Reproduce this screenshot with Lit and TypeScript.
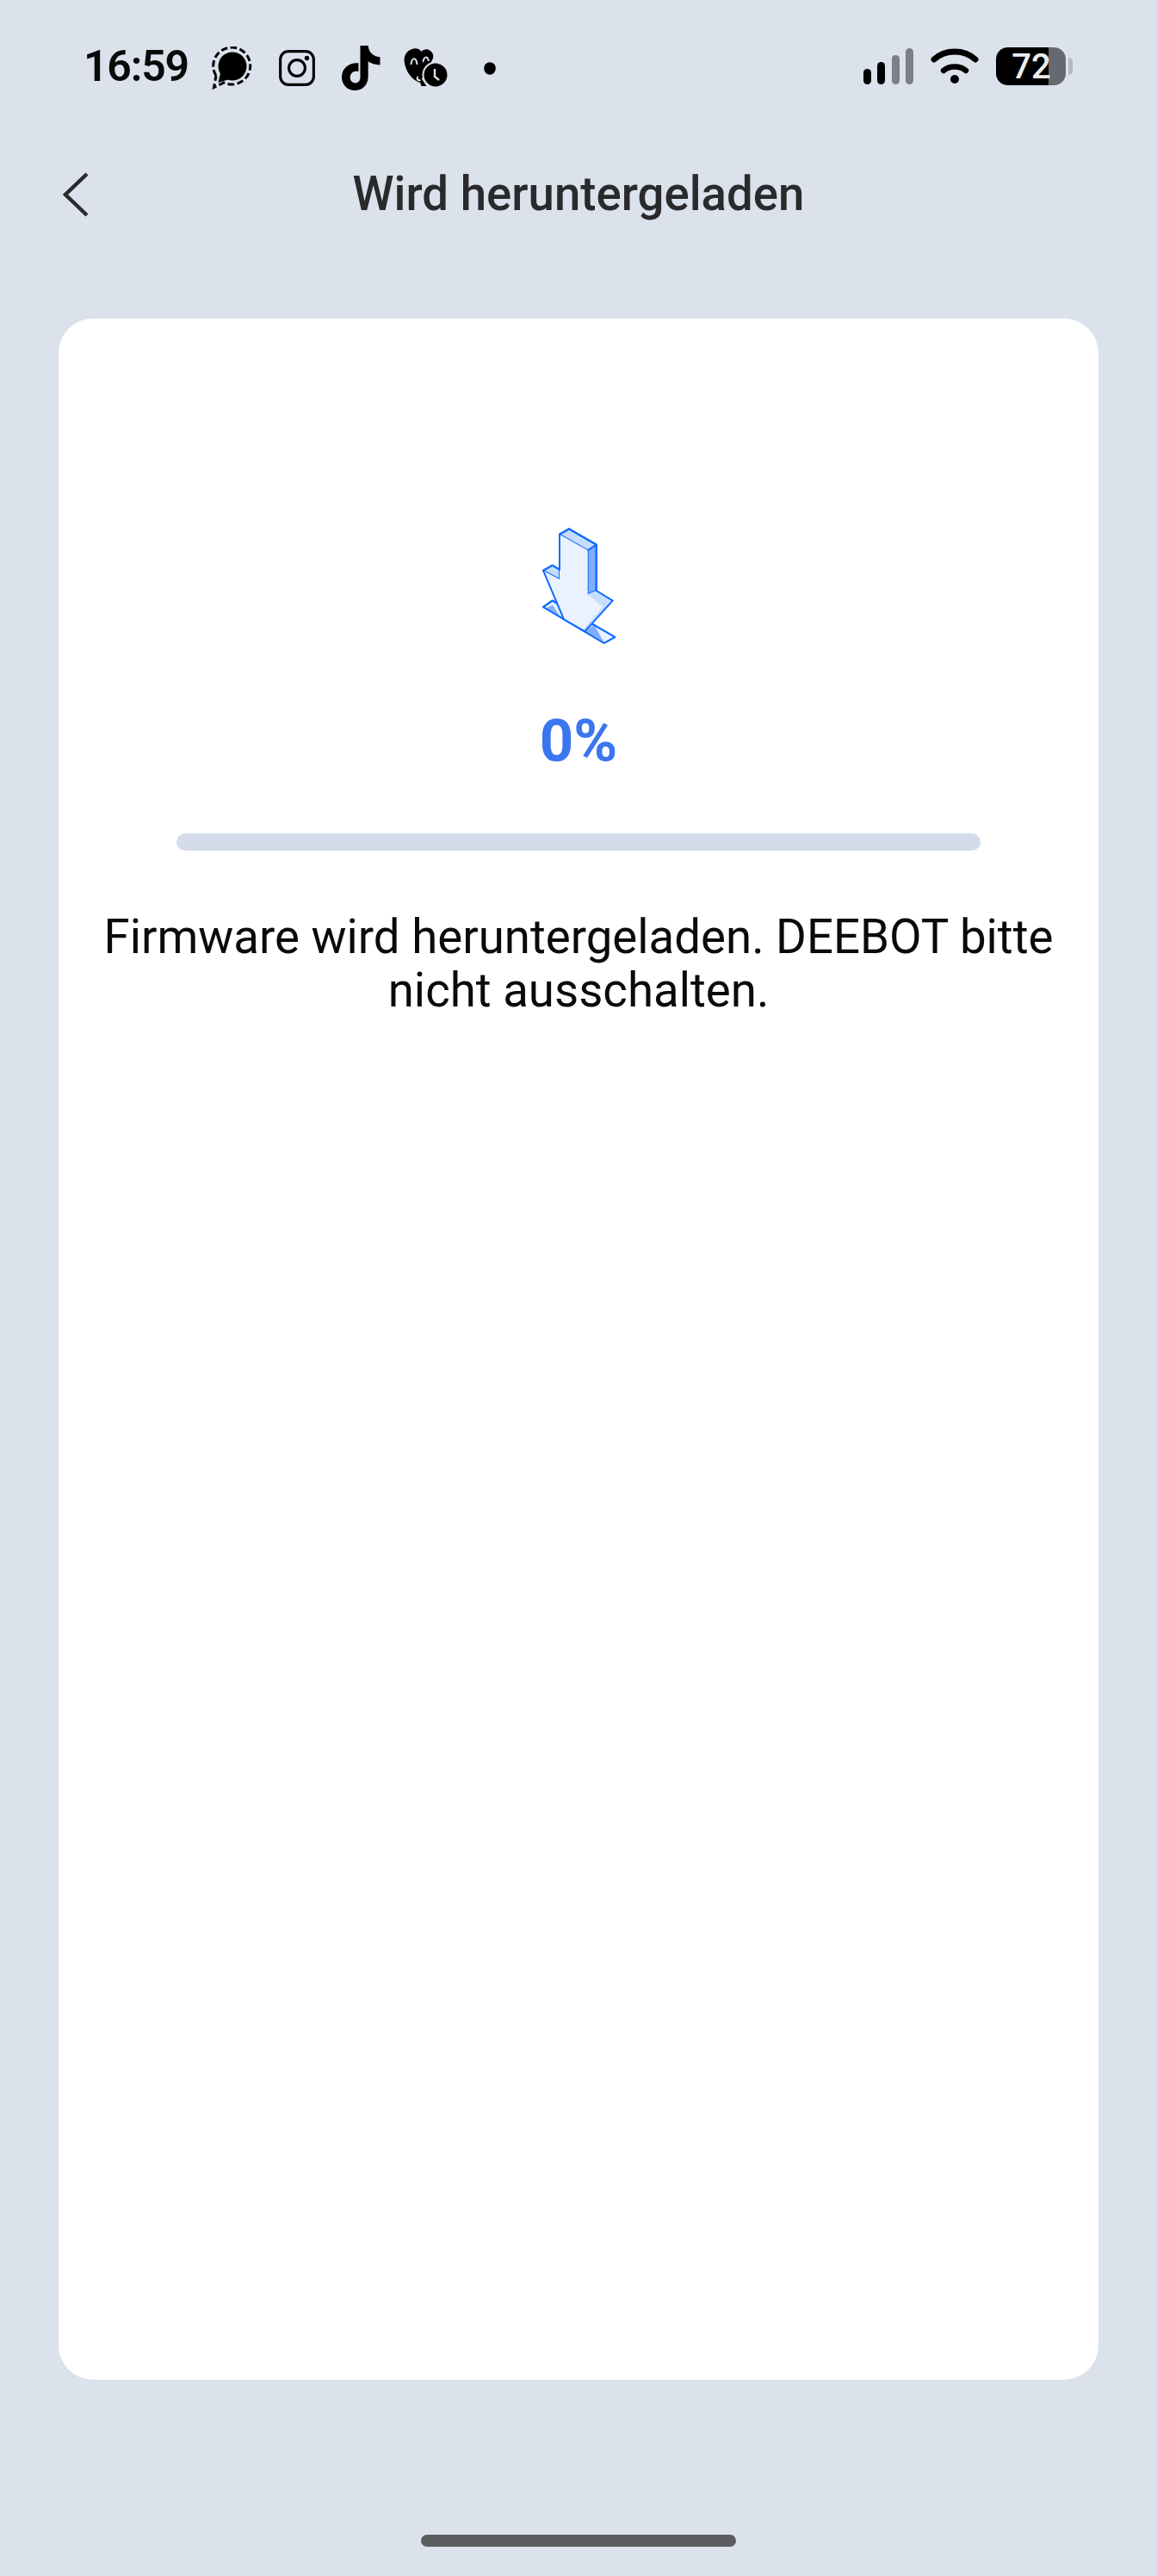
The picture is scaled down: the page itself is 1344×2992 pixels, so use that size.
import { LitElement, html, css } from "lit";
import { customElement } from "lit/decorators.js";

@customElement("app-root")
export class AppRoot extends LitElement {
  static styles = css`
    :host { display: block; width: 1344px; height: 2992px; background: #dbe2ec; font-family: Roboto, "Liberation Sans", sans-serif; overflow: hidden; }
    .page { display: flex; flex-direction: column; height: 2992px; box-sizing: border-box; }
    .status { display: flex; align-items: center; justify-content: space-between; height: 46px; margin-top: 54px; padding: 0 98px 0 97px; }
    .status-left, .status-right { display: flex; align-items: center; }
    .time { font-size: 50px; font-weight: 600; color: #0a0a0a; line-height: 46px; width: 119px; letter-spacing: -1.2px; white-space: nowrap; }
    .status svg { display: block; flex: none; }
    .status-left svg { margin-top: 4px; }
    .i-signal { margin-left: 30px; }
    .i-insta { margin-left: 31px; }
    .i-tiktok { margin-left: 31px; }
    .i-heart { margin-left: 27px; }
    .i-dot { margin-left: 42px; }
    .wifi { margin-left: 19px; }
    .battery { position: relative; margin-left: 20px; width: 89px; height: 44px; }
    .battery-text { position: absolute; left: 18px; top: 0; width: 46px; height: 44px; line-height: 45px; text-align: center; font-size: 40px; font-weight: 500; color: #ececec; }
    .nav { display: flex; align-items: center; justify-content: center; position: relative; height: 60px; margin-top: 95px; }
    .back { position: absolute; left: 73px; top: 5px; display: block; }
    .title { font-size: 54.6px; font-weight: 500; color: #2a2a2c; line-height: 60px; white-space: nowrap; }
    .card { margin: 115px 68px 0; height: 2394px; background: #fff; border-radius: 40px; display: flex; flex-direction: column; align-items: center; box-sizing: border-box; padding-top: 240px; flex: none; }
    .arrow { display: block; margin-left: 16px; }
    .pct { margin-top: 76px; font-size: 69px; font-weight: 700; line-height: 70px; color: #3a76ef; }
    .bar { margin-top: 72px; width: 934px; height: 20px; border-radius: 10px; background: #d4dbea; flex: none; }
    .msg { margin: 69px 0 0; width: 1140px; font-size: 54.6px; line-height: 62px; color: #0a0a0a; text-align: center; }
    .home-wrap { display: flex; justify-content: center; margin-top: 180px; }
    .home { width: 366px; height: 14px; border-radius: 7px; background: #5b5c60; }
  `;

  render() {
    return html`<div class="page">
      <div class="status">
        <div class="status-left">
          <span class="time">16:59</span>
          <svg class="i-signal" width="47" height="50" viewBox="0 0 47 50">
            <circle cx="24" cy="23" r="16.5" fill="#000"/>
            <path d="M5 34 A21.500 21.500 0 1 1 14 42 L2.500 47.500 L5 34" fill="none" stroke="#000" stroke-width="3" stroke-dasharray="7.500 3.500"/>
            <path d="M10 31 L7.500 42 L19 38.500 Z" fill="#000"/>
          </svg>
          <svg class="i-insta" width="42" height="46" viewBox="0 0 40 44">
            <rect x="1.5" y="3.5" width="37" height="37" rx="9" fill="none" stroke="#000" stroke-width="3"/>
            <circle cx="20" cy="22" r="9" fill="none" stroke="#000" stroke-width="3"/>
            <circle cx="31" cy="11" r="2.6" fill="#000"/>
          </svg>
          <svg class="i-tiktok" width="45" height="55" viewBox="0 0 44 52">
            <path fill="#000" d="M21 0 H30 C30.500 6 34 12 43.500 13 V22 C38 22 33.500 20.500 30 18 V35 C30 45 23 51 15 51 C6 51 0 44 0 36 C0 26 8 19 19 20 V29.500 C13 28 9.500 32 9.500 36 C9.500 40 12 42.500 15.500 42.500 C19 42.500 21 39.500 21 36 Z"/>
          </svg>
          <svg class="i-heart" width="51" height="46" viewBox="0 0 50 46">
            <path fill="#000" d="M9 1 C14 -1 18 1 20 4 C23 0 30 0 33 6 C35 10 33 14 30 18 L18 40 C8 36 1 26 0 14 C0 8 3 3 9 1 Z"/>
            <path fill="#000" d="M14 26 L26 44 L20 44 Z"/>
            <path d="M8 19 C9 10 14 10 15 19 M22 16 C23 9 27 9 28.500 15 M16 33 C14 36 16 38 19 37" fill="none" stroke="#dbe2ec" stroke-width="2"/>
            <circle cx="36.500" cy="31" r="14.500" fill="#000" stroke="#dbe2ec" stroke-width="2"/>
            <path d="M35.500 24 V33 L40.500 37" fill="none" stroke="#dbe2ec" stroke-width="2.400"/>
          </svg>
          <svg class="i-dot" width="14" height="15" viewBox="0 0 14 15"><ellipse cx="7" cy="7.500" rx="6.800" ry="7.300" fill="#000"/></svg>
        </div>
        <div class="status-right">
          <svg width="60" height="42" viewBox="0 0 60 42">
            <rect x="1" y="24" width="9" height="18" rx="4.500" fill="#000"/>
            <rect x="17" y="16" width="9" height="26" rx="4.500" fill="#000"/>
            <rect x="34" y="8" width="9" height="34" rx="4.500" fill="#7c7f86"/>
            <rect x="50" y="0" width="9" height="42" rx="4.500" fill="#7c7f86"/>
          </svg>
          <svg class="wifi" width="56" height="42" viewBox="0 0 56 42">
            <path d="M4 13 C17 1 39 1 52 13" fill="none" stroke="#000" stroke-width="7" stroke-linecap="round"/>
            <path d="M15 26 C22 20 34 20 41 26" fill="none" stroke="#000" stroke-width="6.500" stroke-linecap="round"/>
            <circle cx="28" cy="36" r="5" fill="#000"/>
          </svg>
          <div class="battery">
            <svg width="89" height="44" viewBox="0 0 89 44">
              <path fill="#66696f" d="M60 0 H67 C75 0 81 6 81 14 V30 C81 38 75 44 67 44 H60 Z"/>
              <path fill="#000" d="M14 0 H61 V44 H14 C6 44 0 38 0 30 V14 C0 6 6 0 14 0 Z"/>
              <path fill="#b3b9c2" d="M84 12 C87 12 89 14 89 16 V28 C89 30 87 32 84 32 Z"/>
            </svg>
            <span class="battery-text">72</span>
          </div>
        </div>
      </div>
      <div class="nav">
        <svg class="back" width="30" height="54" viewBox="0 0 30 54">
          <path d="M28 2 L3 26 L28 50" fill="none" stroke="#2a2a2c" stroke-width="4.500"/>
        </svg>
        <span class="title">Wird heruntergeladen</span>
      </div>
      <div class="card">
        <svg class="arrow" width="100" height="140" viewBox="30 10 100 140">
          <g stroke="#0f6bff" stroke-width="2" stroke-linejoin="round">
            <path d="M31 105 L41.700 97.700 L114.300 140 L101.700 147 Z" fill="#eaf2ff"/>
            <path d="M35 106 L42 103 L50 115 Z M80 133 L90 125 L101 145 Z" fill="#85adff" stroke="none"/>
            <path d="M31 105 L41.700 97.700 L114.300 140 L101.700 147 Z" fill="none"/>
            <path d="M50 20.700 L61 14.300 L92.700 32.700 L92.700 86 L82.700 90 L82.700 39.300 Z" fill="#85adff"/>
            <path d="M50 20.700 L61 14.300 L92.700 32.700 L82.700 39.300 Z" fill="#c6dcff"/>
            <path d="M31 62.700 L41.700 56.700 L50 61.700 L50 73 Z" fill="#c6dcff"/>
            <path d="M50 20.700 L82.700 39.300 L82.700 90 L100 105 L77 132 L55 119.300 L31 62.700 L50 73 Z" fill="#eaf2ff" stroke="none"/>
            <path d="M82.700 90 L92.700 86 L111.700 97.700 L79.300 133.300 L77 132 L100 105 Z" fill="#c6dcff" stroke="none"/>
            <path d="M50 20.700 L61 14.300 L92.700 32.700 L92.700 86 L111.700 97.700 L79.300 133.300 L55 119.300 L31 62.700 L41.700 56.700 L50 61.700 Z" fill="none"/>
          </g>
        </svg>
        <div class="pct">0%</div>
        <div class="bar"></div>
        <p class="msg">Firmware wird heruntergeladen. DEEBOT bitte nicht ausschalten.</p>
      </div>
      <div class="home-wrap"><div class="home"></div></div>
    </div>`;
  }
}
